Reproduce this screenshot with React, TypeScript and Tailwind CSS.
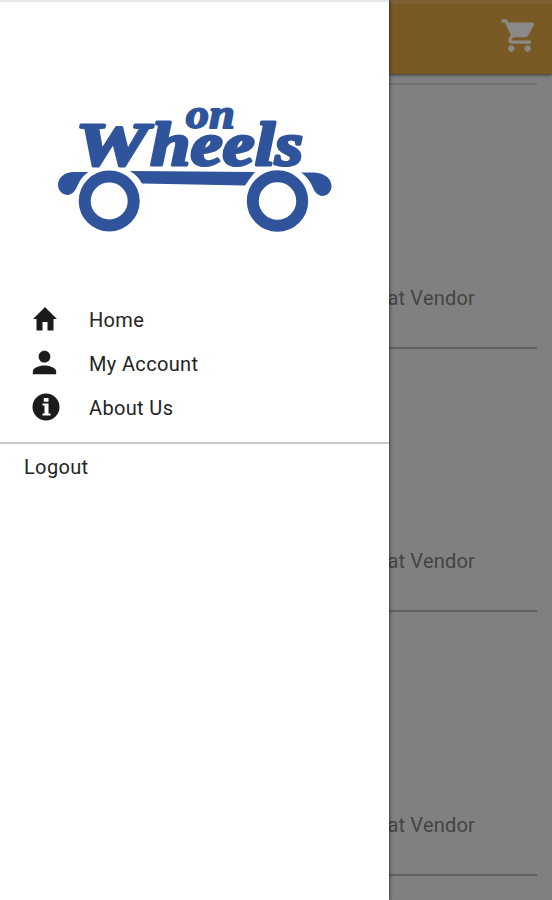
import React from 'react';
import { MdPerson, MdShoppingCart } from 'react-icons/md';

const Logo: React.FC = () => (
    <svg width="280" height="156" viewBox="55 80 280 156" fill="#2f549b" className="ml-[55px] mt-[78px] block shrink-0" role="img" aria-label="On Wheels">
        <g fontFamily="'Liberation Serif', serif" fontWeight="bold" fontStyle="italic" stroke="#2f549b" strokeLinejoin="round">
            <text x="186" y="128" fontSize="41" strokeWidth="2" textLength="49" lengthAdjust="spacingAndGlyphs">on</text>
            <text y="165" strokeWidth="3.2">
                <tspan x="75.500" fontSize="62" textLength="73" lengthAdjust="spacingAndGlyphs">W</tspan>
                <tspan x="150.500" fontSize="61" textLength="153" lengthAdjust="spacingAndGlyphs">heels</tspan>
            </text>
        </g>
        <path d="M130 171 L255 172 Q250 178 245 185.5 L142 183.5 Q138 176 130 171Z" />
        <path d="M88.500 172 H74 C64 172 58 178 58 185 C58 191 63 195 68 195 C79 193 75 181 88.500 172Z" />
        <path d="M301 172.500 H314 C325 173 331.500 179 331.500 186 C331.500 192 327 196 322 196 C311 194 315 182 301 172.500Z" />
        <g fill="none" stroke="#2f549b" strokeWidth="12">
            <circle cx="109.200" cy="201" r="24.500" />
            <circle cx="277.500" cy="201" r="24.700" />
        </g>
    </svg>
);

const HomeIcon: React.FC = () => (
    <svg width="24" height="24" viewBox="0 0 24 24" fill="#1b1b1b">
        <path d="M12 0 24 12h-3.500v11.500h-6V15h-5v8.500h-6V12H0z" />
    </svg>
);

const InfoIcon: React.FC = () => (
    <svg width="28" height="28" viewBox="0 0 28 28" fill="#1b1b1b" className="-ml-px mt-px">
        <circle cx="14" cy="14" r="13.500" />
        <path fill="#fff" d="M11.800 5h4.700v3.800h-4.700zM10.500 10.500h6v10h2v2h-8v-2h2v-8h-2z" />
    </svg>
);

const MenuItem: React.FC<{ icon: React.ReactElement; label: string }> = ({ icon, label }) => (
    <div className="flex h-11 items-center">
        <div className="flex w-[89px] shrink-0 pb-[3px] pl-[33px]">{icon}</div>
        <span className="whitespace-nowrap">{label}</span>
    </div>
);

const VendorRow: React.FC = () => (
    <div className="mr-[15px] flex h-[263.5px] shrink-0 items-end justify-end border-b-2 border-[#626262] pb-[34px]">
        <span className="mr-[62px] whitespace-nowrap text-[20px] leading-[30px] tracking-[0.2px] text-[#444]">at Vendor</span>
    </div>
);

const App: React.FC = () => {
    return (
        <div className="flex h-[900px] w-[552px] overflow-hidden bg-[#808080] font-['Roboto',sans-serif]">
            {/* Drawer */}
            <aside className="z-10 flex w-[389px] shrink-0 flex-col border-t-2 border-[#e9e9e9] bg-white text-[20px] tracking-[0.35px] text-[#242424] shadow-[1px_0_3px_rgba(0,0,0,0.5)]">
                <Logo />
                <nav className="mt-[62px]">
                    <MenuItem icon={<HomeIcon />} label="Home" />
                    <MenuItem icon={<MdPerson size={35} color="#1b1b1b" className="-ml-1.5" />} label="My Account" />
                    <MenuItem icon={<InfoIcon />} label="About Us" />
                </nav>
                <div className="mt-3 border-t-2 border-[#c8c8c8] pl-6 pt-2 leading-[30px]">Logout</div>
            </aside>

            {/* Dimmed page */}
            <main className="flex min-w-0 flex-1 flex-col">
                <header className="flex h-[74px] shrink-0 justify-end border-t-4 border-[#7d5f38] bg-[#795a25] pr-[13px] pt-3 shadow-[0_1px_3px_rgba(0,0,0,0.6)]">
                    <MdShoppingCart size={39} color="#8b8987" />
                </header>
                <div className="mr-[15px] h-[11px] shrink-0 border-b-2 border-[#717171]" />
                <VendorRow />
                <VendorRow />
                <VendorRow />
            </main>
        </div>
    );
};

export default App;
